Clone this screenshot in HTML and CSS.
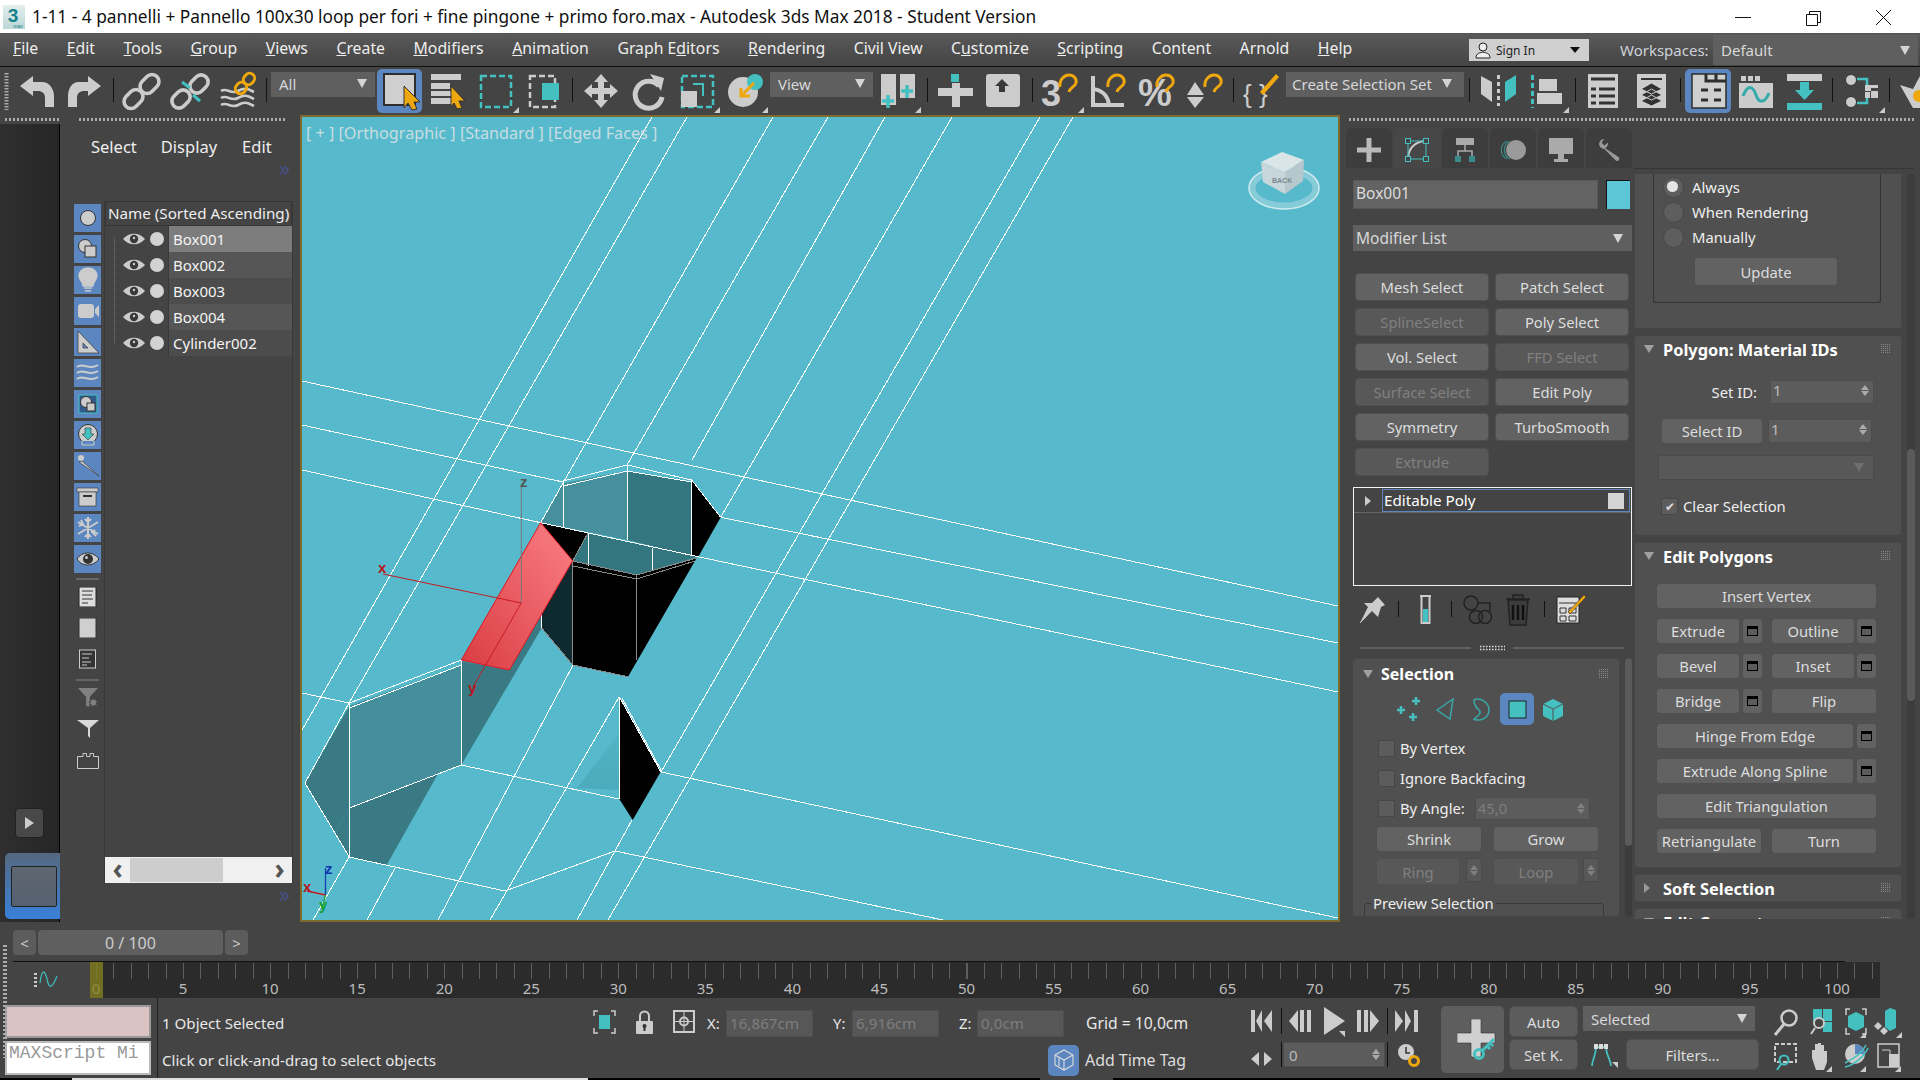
FILE: index.html
```html
<!DOCTYPE html>
<html lang="en">
<head>
<meta charset="utf-8">
<title>3ds Max 2018</title>
<link rel="stylesheet" href="styles.css">
</head>
<body>
<svg class="defs" width="0" height="0">
  <defs>
    <linearGradient id="redface" x1="1" y1="0" x2="0" y2="1"><stop offset="0" stop-color="#fa7f85"/><stop offset="1" stop-color="#d93c42"/></linearGradient>
    <linearGradient id="appbg" x1="0" y1="0" x2="0" y2="1"><stop offset="0" stop-color="#e4eeee"/><stop offset="1" stop-color="#bcd6d6"/></linearGradient>
    <linearGradient id="shadowfade" x1="0" y1="0" x2="0" y2="1"><stop offset="0" stop-color="#4aa9ba" stop-opacity=".35"/><stop offset="1" stop-color="#4aa9ba" stop-opacity=".9"/></linearGradient>
    <path id="hook" d="M0 12 C-1 4 5 0 9 0 C14 0 17 4 16 8 C15 12 10 12 9 17" fill="none" stroke="#eea80e" stroke-width="3"/>
    <path id="tri" d="M6 0 V6 H0 Z" fill="#ccc"/>
  </defs>
</svg>

<header class="titlebar">
  <svg class="appicon" viewBox="0 0 22 24" width="22" height="24"><rect width="22" height="24" fill="url(#appbg)"/><text x="10" y="17" class="appicon-3">3</text><text x="15" y="23" class="appicon-s">max</text></svg>
  <span class="title">1-11 - 4 pannelli + Pannello 100x30 loop per fori + fine pingone + primo foro.max - Autodesk 3ds Max 2018 - Student Version</span>
  <svg class="winbtns" viewBox="1700 0 220 34" width="220" height="34">
    <path d="M1735 17.5 H1751" stroke="#111" fill="none"/>
    <path d="M1806.5 14.5 H1817.5 V25.5 H1806.5 Z M1809.5 14 V11.5 H1820.5 V22.5 H1818" stroke="#111" fill="none"/>
    <path d="M1876 10 L1891 25 M1891 10 L1876 25" stroke="#111" fill="none"/>
  </svg>
</header>

<nav class="menubar">
  <div class="menus">
    <span><u>F</u>ile</span><span><u>E</u>dit</span><span><u>T</u>ools</span><span><u>G</u>roup</span><span><u>V</u>iews</span><span><u>C</u>reate</span><span><u>M</u>odifiers</span><span><u>A</u>nimation</span><span>Graph E<u>d</u>itors</span><span><u>R</u>endering</span><span>Civil View</span><span>C<u>u</u>stomize</span><span><u>S</u>cripting</span><span>Content</span><span>Arnold</span><span><u>H</u>elp</span>
  </div>
  <div class="signin">
    <svg viewBox="0 0 16 18" width="16" height="18"><circle cx="8" cy="6" r="4" fill="#eee" stroke="#222"/><path d="M1 17 C1 12 5 12 8 11 C11 12 15 12 15 17 Z" fill="#eee" stroke="#222"/></svg>
    <span class="signin-text">Sign In</span><i class="caret dark"></i>
  </div>
  <span class="ws-label">Workspaces:</span>
  <div class="dd ws">Default<i class="caret"></i></div>
</nav>

<section class="toolbar">
  <svg viewBox="0 67 271 48" width="271" height="48">
    <path d="M6.5 73 V110" stroke="#aaa" stroke-width="4" stroke-dasharray="1.5 1.5" fill="none"/>
    <path d="M20 86 L33 76 V82 H42 C50 82 54 90 54 96 V107 H45 V98 C45 93 42 91 38 91 H33 V96 Z" fill="#ccc"/>
    <path d="M101 86 L88 76 V82 H79 C71 82 68 90 68 96 V107 H77 V98 C77 93 80 91 84 91 H88 V96 Z" fill="#ccc"/>
    <path d="M113.5 78 V102 M266.5 78 V102" stroke="#111"/>
    <g fill="none" stroke="#ccc" stroke-width="3.6">
      <rect x="139" y="77" width="21" height="14" rx="7" transform="rotate(-45 149.5 84)"/>
      <rect x="123" y="92" width="21" height="14" rx="7" transform="rotate(-45 133.5 99)"/>
      <rect x="189" y="77" width="20" height="14" rx="7" transform="rotate(-45 199 84)"/>
      <rect x="171" y="92" width="20" height="14" rx="7" transform="rotate(-45 181 99)"/>
    </g>
    <path d="M182 82 L190 88 M193 95 L200 101" stroke="#45c0c0" stroke-width="3"/>
    <g fill="none" stroke="#ccc" stroke-width="2.6">
      <path d="M221 91 C227 87 231 95 238 91 S248 89 254 92"/>
      <path d="M221 98 C227 94 231 102 238 98 S248 96 254 99"/>
      <path d="M221 105 C227 101 231 109 238 105 S248 103 254 106"/>
    </g>
    <g fill="none" stroke="#eea80e" stroke-width="3">
      <rect x="243" y="74" width="12" height="10" rx="5" transform="rotate(-50 249 79)"/>
      <rect x="235" y="83" width="12" height="10" rx="5" transform="rotate(-50 241 88)"/>
    </g>
  </svg>
  <div class="dd tool-all">All<i class="caret"></i></div>
  <svg viewBox="375 67 395 48" width="395" height="48">
    <rect x="377" y="69" width="45" height="44" rx="5" fill="#5b86bf"/>
    <rect x="384" y="74" width="31" height="31" fill="#cfcfcf" stroke="#2e2e2e" stroke-width="2"/>
    <path d="M404 86 L420 102 H414 L417 109 L412 110 L408 103 L404 108 Z" fill="#eea80e" stroke="#333"/>
    <path d="M431 74 H461 V80 H431 Z M431 83 H450 V89 H431 Z M431 91 H451 V96 H431 Z M431 98 H451 V104 H431 Z" fill="#ccc"/>
    <path d="M451 86 L465 101 H459 L462 108 L457 109 L454 103 L451 107 Z" fill="#eea80e" stroke="#333"/>
    <rect x="481" y="76" width="30" height="31" fill="none" stroke="#45c0c0" stroke-width="2.5" stroke-dasharray="6 3"/>
    <use href="#tri" x="513" y="107"/>
    <rect x="530" y="76" width="25" height="31" fill="none" stroke="#ccc" stroke-width="2.5" stroke-dasharray="6 3"/>
    <rect x="542" y="83" width="17" height="17" fill="#45c0c0"/>
    <path d="M572.5 78 V102" stroke="#111"/>
    <path d="M601 74 L608 82 H604 V88 H610 V84 L618 91 L610 98 V94 H604 V100 H608 L601 108 L594 100 H598 V94 H592 V98 L584 91 L592 84 V88 H598 V82 H594 Z" fill="#ccc"/>
    <path d="M659 86 A13.5 13.5 0 1 0 662 97" fill="none" stroke="#ccc" stroke-width="5"/>
    <path d="M650 74 L664 78 L661 91 Z" fill="#ccc"/>
    <rect x="682" y="76" width="31" height="31" fill="none" stroke="#45c0c0" stroke-width="2.5" stroke-dasharray="6 3"/>
    <rect x="681" y="91" width="16" height="16" fill="#ccc"/>
    <path d="M693 84 H703 V96" fill="none" stroke="#45c0c0" stroke-width="2"/>
    <use href="#tri" x="714" y="107"/>
    <circle cx="743" cy="92" r="15" fill="#ccc"/>
    <circle cx="755" cy="82" r="8" fill="#45c0c0"/>
    <path d="M754 83 L743 94 M741 88 V96 H750" fill="none" stroke="#eea80e" stroke-width="3"/>
    <use href="#tri" x="762" y="107"/>
  </svg>
  <div class="dd tool-view">View<i class="caret"></i></div>
  <svg viewBox="873 67 413 48" width="413" height="48">
    <path d="M881 74 H896 V105 H881 Z M900 74 H915 V98 H900 Z" fill="#ccc"/>
    <path d="M888 95 V108 M882 101 H894 M907 85 V98 M901 91 H913" stroke="#45c0c0" stroke-width="3.5"/>
    <use href="#tri" x="915" y="107"/>
    <path d="M927.5 78 V102 M1032.5 78 V102 M1233.5 78 V102" stroke="#111"/>
    <rect x="951" y="74" width="8" height="8" fill="#45c0c0"/>
    <path d="M938 88 H952 V83 H960 V88 H973 V96 H960 V107 H952 V96 H938 Z" fill="#ccc"/>
    <rect x="986" y="74" width="34" height="33" rx="3" fill="#ccc"/>
    <path d="M1002 79 L1009 86 H1005 V92 H999 V86 H995 Z" fill="#3a3a3a"/>
    <text x="1041" y="106" class="snap-glyph">3</text>
    <use href="#hook" x="1060" y="75"/>
    <use href="#tri" x="1078" y="107"/>
    <path d="M1093 76 V105 H1124 M1093 89 C1102 90 1108 96 1109 105" fill="none" stroke="#ccc" stroke-width="4"/>
    <use href="#hook" x="1108" y="75"/>
    <text x="1138" y="106" class="snap-pct">%</text>
    <use href="#hook" x="1157" y="75"/>
    <path d="M1195 82 L1204 95 H1187 Z M1187 97 H1204 L1195 108 Z" fill="#ccc"/>
    <use href="#hook" x="1205" y="75"/>
    <text x="1243" y="103" class="brace-glyph">{ }</text>
    <path d="M1260 92 L1276 74 L1279 77 L1263 95 Z" fill="#eea80e"/>
  </svg>
  <div class="dd tool-set">Create Selection Set<i class="caret"></i></div>
  <svg viewBox="1464 67 456 48" width="456" height="48">
    <path d="M1469.5 78 V102 M1575.5 78 V102 M1680.5 78 V102 M1832.5 78 V102 M1889.5 78 V102" stroke="#111"/>
    <path d="M1481 76 L1492 82 V102 L1481 94 Z" fill="#ccc"/>
    <path d="M1498.5 75 V106" stroke="#ccc" stroke-width="3" stroke-dasharray="4 3"/>
    <path d="M1516 75 L1505 82 V102 L1516 94 Z" fill="#45c0c0"/>
    <path d="M1532.5 75 V108" stroke="#45c0c0" stroke-width="3" stroke-dasharray="5 3"/>
    <path d="M1539 79 H1557 V91 H1539 Z M1537 93 H1562 V104 H1537 Z" fill="#ccc"/>
    <use href="#tri" x="1563" y="107"/>
    <rect x="1588" y="74" width="30" height="34" fill="#ccc"/>
    <path d="M1591 79 H1615 M1591 89 H1596 M1599 89 H1615 M1591 96 H1596 M1599 96 H1615 M1591 103 H1596 M1599 103 H1615" stroke="#333" stroke-width="3"/>
    <rect x="1637" y="74" width="29" height="34" fill="#ccc"/>
    <path d="M1641 79 H1662" stroke="#333" stroke-width="2"/>
    <path d="M1651.5 83 L1662 89 L1651.5 94 L1641 89 Z M1651.5 89 L1662 95 L1651.5 100 L1641 95 Z M1651.5 95 L1662 101 L1651.5 106 L1641 101 Z" fill="#333" stroke="#ccc"/>
    <rect x="1685" y="69" width="46" height="44" rx="5" fill="#5b86bf"/>
    <path d="M1692 74 H1726 V108 H1692 Z" fill="#cfcfcf" stroke="#2e2e2e" stroke-width="1.5"/>
    <path d="M1706 74 V81 H1726 M1716 74 V81 M1701 90 H1708 M1714 90 H1721 M1701 100 H1708 M1714 100 H1721" fill="none" stroke="#2e2e2e" stroke-width="3"/>
    <rect x="1739" y="74" width="34" height="34" fill="#ccc"/>
    <path d="M1739 74 H1773 V83 H1739 Z" fill="#444"/>
    <path d="M1741 76 H1746 V81 H1741 Z M1748 76 H1753 V81 H1748 Z M1755 76 H1760 V81 H1755 Z" fill="#ccc"/>
    <path d="M1743 96 C1748 84 1753 86 1756 95 C1759 104 1765 103 1769 93" fill="none" stroke="#35aaaa" stroke-width="3"/>
    <path d="M1787 74 H1822 V81 H1787 Z" fill="#ccc"/>
    <path d="M1800 82 H1809 V90 H1814 L1804.5 100 L1795 90 H1800 Z" fill="#45c0c0"/>
    <rect x="1787" y="103" width="35" height="7" fill="#45c0c0"/>
    <circle cx="1851" cy="80" r="5.5" fill="#ccc" stroke="#333"/><circle cx="1851" cy="102" r="5.5" fill="#ccc" stroke="#333"/>
    <path d="M1857 79 H1867 V86 M1857 103 H1867 V97" fill="none" stroke="#45c0c0" stroke-width="2.5"/>
    <path d="M1865 85 H1871 V91 H1865 Z M1871 91 H1878 V98 H1871 Z M1871 85 H1878 V88 H1871 Z M1865 92 H1870 V98 H1865 Z" fill="#ccc"/>
    <use href="#tri" x="1879" y="107"/>
    <path d="M1900 85 L1913 89 L1920 76 V108 H1913 Z" fill="#ccc"/>
    <circle cx="1919" cy="96" r="6" fill="#eea80e"/>
  </svg>
</section>

<main class="main">
  <aside class="sidebar">
    <div class="handle"><i class="dots dots-side"></i></div>
    <div class="darkpanel">
      <div class="playbtn"><i class="play"></i></div>
      <div class="thumb"><div class="thumb-in"></div></div>
    </div>
  </aside>

  <section class="explorer">
    <div class="handle"><i class="dots dots-exp"></i></div>
    <div class="exp-menu"><span>Select</span><span>Display</span><span>Edit</span></div>
    <div class="chev">»</div>
    <div class="exp-body">
      <div class="exp-tools">
        <div class="ebtn"><svg viewBox="0 0 27 28"><circle cx="14" cy="14" r="7.5" fill="#ccc" stroke="#333"/></svg></div>
        <div class="ebtn"><svg viewBox="0 0 27 28"><circle cx="11" cy="11" r="6.5" fill="#ccc" stroke="#333"/><rect x="11" y="11" width="11" height="11" fill="#ccc" stroke="#333"/></svg></div>
        <div class="ebtn"><svg viewBox="0 0 27 28"><path d="M14 2 C8 2 5 6 5 10 C5 14 9 16 9 20 H19 C19 16 23 14 23 10 C23 6 20 2 14 2 Z M10 22 H18 M11 25 H17" fill="#ccc" stroke="#ccc" stroke-width="1.3"/></svg></div>
        <div class="ebtn"><svg viewBox="0 0 27 28"><rect x="4" y="7" width="16" height="14" rx="3" fill="#ccc"/><path d="M21 12 L25 8 V20 L21 16 Z" fill="#ccc"/></svg></div>
        <div class="ebtn"><svg viewBox="0 0 27 28"><path d="M4 3 L25 25 H4 Z M9 15 V20 H14 Z" fill="#ccc" fill-rule="evenodd" stroke="#333" stroke-width=".7"/></svg></div>
        <div class="ebtn"><svg viewBox="0 0 27 28"><path d="M3 8 C9 3 16 12 24 6 M3 14 C9 9 16 18 24 12 M3 20 C9 15 16 24 24 18" fill="none" stroke="#ccc" stroke-width="2"/></svg></div>
        <div class="ebtn"><svg viewBox="0 0 27 28"><rect x="5" y="5" width="18" height="18" fill="#2f5a8a" stroke="#45c0c0"/><circle cx="12" cy="12" r="5.5" fill="#ccc" stroke="#333"/><rect x="13" y="13" width="8" height="8" fill="#ccc" stroke="#333"/></svg></div>
        <div class="ebtn"><svg viewBox="0 0 27 28"><circle cx="14" cy="13" r="9.5" fill="#ccc" stroke="#333"/><path d="M11 7 H17 V13 H20 L14 19 L8 13 H11 Z" fill="#45c0c0" stroke="#333" stroke-width=".6"/><path d="M8 20 V24 H20 V20" fill="#5b86bf" stroke="#ccc"/></svg></div>
        <div class="ebtn"><svg viewBox="0 0 27 28"><circle cx="7" cy="6" r="3" fill="#ccc"/><path d="M8 9 L25 24 L5 10 Z" fill="#ccc" stroke="#333" stroke-width=".6"/></svg></div>
        <div class="ebtn"><svg viewBox="0 0 27 28"><rect x="3" y="5" width="21" height="4" fill="#ccc" stroke="#333" stroke-width=".6"/><rect x="5" y="9" width="17" height="14" fill="#ccc" stroke="#333" stroke-width=".6"/><path d="M9 13 H18" stroke="#333" stroke-width="2"/></svg></div>
        <div class="ebtn"><svg viewBox="0 0 27 28"><path d="M14 3 V25 M4 8 L24 20 M24 8 L4 20 M11 5 L14 8 L17 5 M11 23 L14 20 L17 23 M5 12 L9 10 L7 6 M22 22 L18 18 L21 16" fill="none" stroke="#ccc" stroke-width="2"/></svg></div>
        <div class="ebtn"><svg viewBox="0 0 27 28"><path d="M3 14 C8 6 19 6 25 14 C19 22 8 22 3 14 Z" fill="#ccc" stroke="#333"/><circle cx="14" cy="14" r="5" fill="#333"/><circle cx="12.5" cy="12.5" r="1.5" fill="#ccc"/></svg></div>
        <hr class="esep">
        <div class="eicon"><svg viewBox="0 0 27 20"><rect x="5" y="0" width="17" height="20" fill="#ddd" stroke="#222"/><path d="M8 4 H19 M8 8 H18 M8 12 H19 M8 16 H14" stroke="#333"/></svg></div>
        <div class="eicon"><svg viewBox="0 0 27 20"><rect x="5" y="0" width="17" height="20" fill="#cfcfcf" stroke="#333"/></svg></div>
        <div class="eicon"><svg viewBox="0 0 27 20"><rect x="5.5" y="1" width="16" height="18" fill="#333" stroke="#ccc"/><path d="M8 5 H18 M8 9 H15 M8 13 H17 M8 16 H13" stroke="#ccc"/></svg></div>
        <hr class="esep">
        <div class="eicon"><svg viewBox="0 0 27 22"><path d="M3 0 H25 L16 10 V20 H12 V10 Z" fill="#808080"/><circle cx="20" cy="16" r="4" fill="#808080" stroke="#444" stroke-dasharray="2 1" stroke-width="2"/></svg></div>
        <div class="eicon"><svg viewBox="0 0 27 20"><path d="M3 1 H25 L16 9 V19 L14 17 V9 Z" fill="#d8d8d8"/></svg></div>
        <div class="eicon"><svg viewBox="0 0 27 20"><path d="M3.5 18.5 V6.5 H9 V3.5 H12.5 V6.5 H16 V3.5 H19.5 V6.5 H24.5 V18.5 Z" fill="none" stroke="#ccc"/></svg></div>
      </div>
      <div class="tree">
        <div class="tree-head">Name (Sorted Ascending)</div>
        <div class="tree-rows">
          <i class="tree-guide"></i>
          <div class="trow"><svg class="eye" viewBox="0 0 22 14"><path d="M0 7 C6 0 16 0 22 7 C16 14 6 14 0 7 Z" fill="#ccc"/><circle cx="11" cy="7" r="4.2" fill="#3a3a3a"/><circle cx="11" cy="6" r="1.2" fill="#ccc"/></svg><i class="dot"></i><span class="tname sel">Box001</span></div>
          <div class="trow"><svg class="eye" viewBox="0 0 22 14"><path d="M0 7 C6 0 16 0 22 7 C16 14 6 14 0 7 Z" fill="#ccc"/><circle cx="11" cy="7" r="4.2" fill="#3a3a3a"/><circle cx="11" cy="6" r="1.2" fill="#ccc"/></svg><i class="dot"></i><span class="tname lt">Box002</span></div>
          <div class="trow"><svg class="eye" viewBox="0 0 22 14"><path d="M0 7 C6 0 16 0 22 7 C16 14 6 14 0 7 Z" fill="#ccc"/><circle cx="11" cy="7" r="4.2" fill="#3a3a3a"/><circle cx="11" cy="6" r="1.2" fill="#ccc"/></svg><i class="dot"></i><span class="tname">Box003</span></div>
          <div class="trow"><svg class="eye" viewBox="0 0 22 14"><path d="M0 7 C6 0 16 0 22 7 C16 14 6 14 0 7 Z" fill="#ccc"/><circle cx="11" cy="7" r="4.2" fill="#3a3a3a"/><circle cx="11" cy="6" r="1.2" fill="#ccc"/></svg><i class="dot"></i><span class="tname lt">Box004</span></div>
          <div class="trow"><svg class="eye" viewBox="0 0 22 14"><path d="M0 7 C6 0 16 0 22 7 C16 14 6 14 0 7 Z" fill="#ccc"/><circle cx="11" cy="7" r="4.2" fill="#3a3a3a"/><circle cx="11" cy="6" r="1.2" fill="#ccc"/></svg><i class="dot"></i><span class="tname">Cylinder002</span></div>
        </div>
        <div class="hscroll"><span class="harrow">‹</span><i class="hthumb"></i><span class="harrow">›</span></div>
      </div>
    </div>
    <div class="chev chev2">»</div>
  </section>

  <section class="viewport">
    <span class="vp-label">[ + ] [Orthographic ] [Standard ] [Edged Faces ]</span>
    <svg class="scene" viewBox="302 117 1036 803" width="1036" height="803">
      <rect x="302" y="117" width="1036" height="803" fill="#56bacc"/>
      <polygon points="619,733 619,790 577,788" fill="url(#shadowfade)"/>
      <polygon points="540.7,522.7 563.3,483.3 627.3,470.7 627.3,540 563.3,527" fill="#468f9c"/>
      <polygon points="627.3,470.7 691.7,481.7 691.7,556 627.3,540" fill="#347680"/>
      <polygon points="588,533.3 698.3,556.7 636.7,575 572.7,561" fill="#347680"/>
      <polygon points="691.7,480 720.7,517.3 698.3,556.7 691.7,555" fill="#000"/>
      <polygon points="540.7,522.7 588,533.3 572.7,560.7" fill="#000"/>
      <polygon points="572.7,561 636.7,575 696.7,558 628,676.7 572.7,665" fill="#000"/>
      <polygon points="541.7,610 572.7,561 572.7,665 541.7,628" fill="#0e2a30"/>
      <polygon points="461.3,661 509.3,670 541.7,612 541.7,628 461.3,765" fill="#397a84"/>
      <polygon points="349.3,706 461.3,665 461.3,765 349.3,808" fill="#458e9b"/>
      <polygon points="305,783 349.3,706 349.3,808 335,833" fill="#397a84"/>
      <polygon points="335,833 349.3,808 438.3,773.3 386.7,865 349.3,857" fill="#397a84"/>
      <polygon points="619.3,696.7 660.7,771.7 632.7,820 619.3,799" fill="#000"/>
      <g class="wire">
        <path d="M302 381 L1338 606"/>
        <path d="M302 425 L563 482 M720.7 517.3 L1338 643" />
        <path d="M302 470 L540.7 522.7 M540.7 522.7 L698 556.7 L1338 692"/>
        <path d="M302 693 L349 703 M661 772 L1338 918"/>
        <path d="M461 765 L619 799"/>
        <path d="M349 857 L505 891 L615 851 L943 920"/>
        <path d="M652 117 L302 730"/>
        <path d="M687 117 L349 703 L305 783"/>
        <path d="M773 117 L563 483 L540.7 522.7"/>
        <path d="M828 117 L627 465"/>
        <path d="M885 117 L692 460"/>
        <path d="M952 117 L720.7 517.3"/>
        <path d="M1040 117 L661 772 M632 820 L577 920"/>
        <path d="M1073 117 L608 920"/>
        <path d="M619.3 696.7 L490 920"/>
        <path d="M573 665 L438 920"/>
        <path d="M395 868 L367 920"/>
        <path d="M349 857 L313 920"/>
        <path d="M563.3 481 L627.3 465 L691.7 480 L720.7 517.3 M563.3 486 L627.3 471 L691.7 482"/>
        <path d="M563.3 483 V527 M627.3 465 V540 M691.7 480 V555 M588 533 V566 M652.7 548 V570 M541 615 V628"/>
        <path d="M349.3 703 V857 M461.3 660 V765 M349.3 703 L461.3 660 M349.3 708 L461.3 665 M305 783 L349.3 857 M349.3 808 L461.3 765"/>
        <path d="M619.3 696.7 V799 M619.3 696.7 L660.7 771.7 M622 698 L661 770"/>
      </g>
      <path class="greyedge" d="M572.7 561 L636.7 575 L696.7 558 M572.7 566 L636.7 579 L695 561 M572.7 561 V665 L628 676.7 M636.7 575 V660 M541.7 628 L572.7 665 M588 533 L572.7 561"/>
      <polygon points="540.7,522.7 572.7,560.7 509.3,670 461.3,660" fill="url(#redface)" stroke="#e0141e"/>
      <path d="M521.3 603 V485" stroke="#777" fill="none"/>
      <path d="M521.3 603 L383 574 M521.3 603 L473 687" stroke="#c51c22" fill="none"/>
      <text x="520" y="487" class="gz gz-grey">z</text>
      <text x="378" y="573" class="gz gz-red">x</text>
      <text x="468" y="693" class="gz gz-red">y</text>
      <path d="M325.5 895 V868" stroke="#1540b0" stroke-width="1.3" fill="none"/>
      <path d="M325.5 895 L307 891" stroke="#c51c22" stroke-width="1.3" fill="none"/>
      <path d="M325.5 895 L322 908" stroke="#18a038" stroke-width="1.3" fill="none"/>
      <text x="325" y="874" class="gz gz-blue">z</text>
      <text x="303" y="892" class="gz gz-red">x</text>
      <text x="319" y="910" class="gz gz-green">y</text>
      <g class="cube">
        <ellipse cx="1284" cy="188" rx="32" ry="18" fill="none" stroke="#86ccd8" stroke-width="7"/>
        <ellipse cx="1284" cy="188" rx="35" ry="21" fill="none" stroke="#cfeaef" stroke-width="1.5"/>
        <polygon points="1282,152 1304,160 1285,172 1261,162" fill="#d9e5e7"/>
        <polygon points="1261,162 1285,172 1285,194 1263,182" fill="#c6d6da"/>
        <polygon points="1285,172 1304,160 1303,181 1285,194" fill="#b6c8cd"/>
        <text x="1272" y="183" class="cube-text">BACK</text>
      </g>
    </svg>
  </section>

  <aside class="panels">
    <div class="cmd">
      <div class="handle-r"><i class="dots dots-r"></i></div>
      <div class="tabs">
        <div class="tab"><svg viewBox="0 0 24 24"><path d="M9.5 0 H14.5 V9.5 H24 V14.5 H14.5 V24 H9.5 V14.5 H0 V9.5 H9.5 Z" fill="#b9b9b9"/></svg></div>
        <div class="tab active"><svg viewBox="0 0 24 24"><path d="M3 20 C4 10 10 4 20 3" fill="none" stroke="#ccc" stroke-width="2"/><path d="M3 3 H21 M3 3 V21 M21 3 V21 M3 21 H21" stroke="#45c0c0"/><rect x="0.5" y="0.5" width="5" height="5" fill="#444" stroke="#45c0c0"/><rect x="18.5" y="0.5" width="5" height="5" fill="#444" stroke="#45c0c0"/><rect x="0.5" y="18.5" width="5" height="5" fill="#444" stroke="#45c0c0"/><rect x="18.5" y="18.5" width="5" height="5" fill="#444" stroke="#45c0c0"/></svg></div>
        <div class="tab"><svg viewBox="0 0 24 24"><rect x="3" y="0" width="18" height="7" fill="#aaa"/><path d="M12 7 V13 M5 19 V13 H19 V19" fill="none" stroke="#aaa" stroke-width="1.5"/><rect x="2" y="18" width="6" height="6" fill="#3c8a8a"/><rect x="16" y="18" width="6" height="6" fill="#3c8a8a"/></svg></div>
        <div class="tab"><svg class="wide" viewBox="0 0 28 24"><path d="M8 3 A10 10 0 0 0 8 21 M11 3 A10 10 0 0 0 11 21" fill="none" stroke="#3c8a8a" stroke-width="1.2"/><circle cx="17" cy="12" r="10" fill="#9a9a9a"/></svg></div>
        <div class="tab"><svg viewBox="0 0 24 24"><rect x="0" y="0" width="24" height="16" fill="#aaa"/><rect x="9" y="16" width="6" height="5" fill="#aaa"/><rect x="5" y="21" width="14" height="3" fill="#aaa"/></svg></div>
        <div class="tab"><svg viewBox="0 0 26 26"><path d="M3 9 C1 5 4 1 8 1 L5 5 L8 8 L12 5 C12 8 11 10 9 11 L24 21 C25 24 22 26 20 24 L8 12 C6 12 4 11 3 9 Z" fill="#999"/></svg></div>
      </div>
      <div class="namerow"><div class="namebox">Box001</div><div class="swatch"></div></div>
      <div class="dd modlist">Modifier List<i class="caret"></i></div>
      <div class="modgrid">
        <div class="b">Mesh Select</div><div class="b">Patch Select</div>
        <div class="b off">SplineSelect</div><div class="b">Poly Select</div>
        <div class="b">Vol. Select</div><div class="b off">FFD Select</div>
        <div class="b off">Surface Select</div><div class="b">Edit Poly</div>
        <div class="b">Symmetry</div><div class="b">TurboSmooth</div>
        <div class="b off">Extrude</div>
      </div>
      <div class="stack">
        <div class="stack-row"><i class="rtri"></i><div class="stack-item">Editable Poly<i class="stack-sq"></i></div></div>
      </div>
      <svg class="stack-tools" viewBox="1340 590 293 65" width="293" height="65">
        <path d="M1378 598 L1385 606 L1381 608 L1378 618 L1372 612 L1363 621 L1360 624 L1368 608 L1364 604 L1372 604 Z" fill="#ccc"/>
        <path d="M1360 624 L1369 614" stroke="#ccc"/>
        <path d="M1398.5 602 V618 M1451.5 602 V618 M1544.5 602 V618" stroke="#111"/>
        <path d="M1420 597 H1431 M1421.5 597 V624 H1429.5 V597" fill="none" stroke="#ccc" stroke-width="2"/>
        <rect x="1423" y="610" width="5" height="13" fill="#45c0c0"/>
        <circle cx="1471" cy="604" r="7" fill="#444" stroke="#222" stroke-width="1.5"/>
        <path d="M1478 604 H1490 V612" fill="none" stroke="#222" stroke-width="1.5"/>
        <circle cx="1476" cy="618" r="6.5" fill="none" stroke="#222" stroke-width="1.5"/>
        <circle cx="1485" cy="618" r="6.5" fill="none" stroke="#222" stroke-width="1.5"/>
        <path d="M1506 600 H1530 M1513 600 V596 H1523 V600 M1508 601 L1510 626 H1526 L1528 601 Z" fill="#3c3c3c" stroke="#222" stroke-width="1.5"/>
        <path d="M1513 606 V621 M1518 606 V621 M1523 606 V621" stroke="#111" stroke-width="2.5"/>
        <rect x="1557" y="598" width="22" height="26" fill="#ddd" stroke="#222"/>
        <path d="M1559 604 H1577 M1560 609 H1566 V614 H1560 Z M1569 609 H1576 V614 H1569 Z M1560 617 H1566 V622 H1560 Z M1569 617 H1576 V622 H1569 Z" fill="none" stroke="#333"/>
        <path d="M1568 613 L1584 596 L1586 598 L1570 615 Z" fill="#eea80e" stroke="#222" stroke-width=".5"/>
        <path d="M1360 649 H1471 M1513 649 H1624" stroke="#6a6a6a" stroke-width="1.5"/>
        <path d="M1480 647.5 H1505 M1480 650.5 H1505" stroke="#ddd" stroke-width="1.5" stroke-dasharray="1.5 1.5"/>
      </svg>
      <div class="sel-wrap">
        <div class="rollout r-sel">
          <div class="rhead"><i class="dtri"></i><span>Selection</span><i class="grip"></i></div>
          <svg class="subobj" viewBox="1352 692 268 36" width="268" height="36">
            <rect x="1500" y="694" width="34" height="32" rx="5" fill="#5b86bf"/>
            <path d="M1412 702 H1420 M1416 698 V706 M1397 711 H1405 M1401 707 V715 M1409 718 H1417 M1413 714 V722" stroke="#45c0c0" stroke-width="2.5"/>
            <path d="M1437 711 L1453 700 L1450 720 Z" fill="none" stroke="#38a8a8" stroke-width="1.5"/>
            <path d="M1474 701 C1480 698 1489 703 1489 711 C1489 719 1480 723 1474 720 C1479 716 1482 714 1479 711 C1476 708 1474 706 1474 701 Z" fill="none" stroke="#38a8a8" stroke-width="1.5"/>
            <rect x="1509" y="702" width="17" height="17" fill="#45c0c0" stroke="#222"/>
            <path d="M1553 700 L1563 705 V717 L1553 722 L1543 717 V705 Z" fill="#45c0c0"/>
            <path d="M1543 705 L1553 710 L1563 705 M1553 710 V722" fill="none" stroke="#505050"/>
          </svg>
          <label class="chk first"><i class="box"></i>By Vertex</label>
          <label class="chk"><i class="box"></i>Ignore Backfacing</label>
          <label class="chk"><i class="box"></i>By Angle:<span class="spin angle off-t">45,0<i class="arrows"></i></span></label>
          <div class="sel-btns">
            <div class="b b26 shrink">Shrink</div><div class="b b26 grow">Grow</div>
          </div>
          <div class="sel-btns second">
            <div class="b b26 off ring">Ring</div><div class="mini"><i class="arrows"></i></div>
            <div class="b b26 off loop">Loop</div><div class="mini"><i class="arrows"></i></div>
          </div>
          <div class="groupbox"><span>Preview Selection</span></div>
        </div>
        <div class="vscroll vs1"><i></i></div>
      </div>
    </div>

    <div class="cmd2">
      <div class="handle-r2"></div>
      <div class="cmd2-body">
        <div class="rolls">
          <div class="rollout r-top">
            <div class="radios">
              <div class="radio on">Always</div>
              <div class="radio">When Rendering</div>
              <div class="radio">Manually</div>
              <div class="b update">Update</div>
            </div>
          </div>
          <div class="rollout r-ids">
            <div class="rhead2"><i class="dtri"></i><span>Polygon: Material IDs</span><i class="grip"></i></div>
            <div class="idrow first"><span class="setid">Set ID:</span><span class="spin idspin">1<i class="arrows"></i></span></div>
            <div class="idrow"><div class="b b26 selid">Select ID</div><span class="spin idspin">1<i class="arrows"></i></span></div>
            <div class="dd matdd"><i class="caret dim"></i></div>
            <label class="chk clear"><i class="box checked">✔</i>Clear Selection</label>
          </div>
          <div class="rollout r-edit">
            <div class="rhead2"><i class="dtri"></i><span>Edit Polygons</span><i class="grip"></i></div>
            <div class="erows">
              <div class="erow"><div class="b b26 full">Insert Vertex</div></div>
              <div class="erow"><div class="b b26 wa">Extrude</div><div class="b b26 sq"><i></i></div><div class="b b26 wa">Outline</div><div class="b b26 sq"><i></i></div></div>
              <div class="erow"><div class="b b26 wa">Bevel</div><div class="b b26 sq"><i></i></div><div class="b b26 wa">Inset</div><div class="b b26 sq"><i></i></div></div>
              <div class="erow"><div class="b b26 wa">Bridge</div><div class="b b26 sq"><i></i></div><div class="b b26 wb">Flip</div></div>
              <div class="erow"><div class="b b26 wl">Hinge From Edge</div><div class="b b26 sq"><i></i></div></div>
              <div class="erow"><div class="b b26 wl">Extrude Along Spline</div><div class="b b26 sq"><i></i></div></div>
              <div class="erow"><div class="b b26 full">Edit Triangulation</div></div>
              <div class="erow"><div class="b b26 wc">Retriangulate</div><div class="b b26 wb">Turn</div></div>
            </div>
          </div>
          <div class="rollout r-soft">
            <div class="rhead2"><i class="rtri dim"></i><span>Soft Selection</span><i class="grip"></i></div>
          </div>
          <div class="rollout r-geom">
            <div class="rhead2"><i class="dtri"></i><span>Edit Geometry</span><i class="grip"></i></div>
          </div>
        </div>
        <div class="vscroll vs2"><i></i></div>
      </div>
    </div>
  </aside>
</main>

<footer class="bottom">
  <i class="vdots"></i>
  <div class="slider">
    <div class="s-arrow">&lt;</div><div class="s-bar">0 / 100</div><div class="s-arrow">&gt;</div>
  </div>
  <div class="trackrow">
    <div class="curvebtn"><svg viewBox="0 0 24 18" width="24" height="18"><path d="M0 3 H3 M0 7 H3 M0 11 H3 M0 15 H3" stroke="#ccc" stroke-width="2"/><path d="M6 12 C8 -4 11 0 13 8 C15 18 18 18 23 5" fill="none" stroke="#3fb8b8" stroke-width="1.3"/></svg></div>
    <div class="track">
      <div class="ticks"></div>
      <div class="labels"><span>0</span><span>5</span><span>10</span><span>15</span><span>20</span><span>25</span><span>30</span><span>35</span><span>40</span><span>45</span><span>50</span><span>55</span><span>60</span><span>65</span><span>70</span><span>75</span><span>80</span><span>85</span><span>90</span><span>95</span><span>100</span></div>
      <i class="timemark"></i>
    </div>
  </div>
  <div class="status">
    <div class="listener">
      <div class="pink"></div>
      <div class="mxs">MAXScript Mi</div>
    </div>
    <div class="mid">
      <div class="midrow one">
        <span class="msg">1 Object Selected</span>
        <svg viewBox="590 1002 117 42" width="117" height="42">
          <path d="M594 1016 V1011 H598 M611 1011 H615 V1016 M594 1028 V1033 H598 M615 1028 V1033 H611" fill="none" stroke="#ccc" stroke-width="1.5"/>
          <rect x="599" y="1015" width="11" height="14" fill="#45c0c0"/>
          <path d="M640 1021 V1016 A4.5 4.5 0 0 1 649 1016 V1021" fill="none" stroke="#ccc" stroke-width="2"/>
          <rect x="636" y="1021" width="17" height="13" rx="1" fill="#ccc"/>
          <circle cx="644.5" cy="1026" r="2" fill="#333"/><rect x="643.5" y="1026" width="2" height="5" fill="#333"/>
          <rect x="674" y="1011" width="20" height="21" fill="none" stroke="#ccc" stroke-width="2"/>
          <circle cx="684" cy="1021.5" r="4" fill="none" stroke="#ccc" stroke-width="2"/>
          <path d="M684 1011 V1032 M674 1021.5 H694" stroke="#ccc"/>
        </svg>
        <span class="coord cx">X:</span><span class="field">16,867cm</span>
        <span class="coord cy">Y:</span><span class="field">6,916cm</span>
        <span class="coord cz">Z:</span><span class="field">0,0cm</span>
        <span class="grid-t">Grid = 10,0cm</span>
      </div>
      <div class="midrow two">
        <span class="msg long">Click or click-and-drag to select objects</span>
        <div class="tagbtn"><svg viewBox="0 0 20 22" width="20" height="22"><path d="M10 1 L19 6 V16 L10 21 L1 16 V6 Z M1 6 L10 11 L19 6 M10 11 V21 M5 9 V17" fill="none" stroke="#ddd" stroke-width="1.1"/></svg></div>
        <span class="tagtext">Add Time Tag</span>
      </div>
    </div>
    <div class="playback">
      <svg viewBox="1246 1003 179 36" width="179" height="36">
        <g fill="#ccc">
          <path d="M1251 1010 H1255 V1032 H1251 Z M1262 1010 V1032 L1256 1021 Z M1272 1010 V1032 L1264 1021 Z"/>
          <path d="M1298 1010 V1032 L1289 1021 Z M1300 1010 H1304 V1032 H1300 Z M1307 1010 H1311 V1032 H1307 Z"/>
          <path d="M1324 1007 L1345 1021 L1324 1035 Z"/>
          <path d="M1357 1010 H1361 V1032 H1357 Z M1364 1010 H1368 V1032 H1364 Z M1370 1010 L1379 1021 L1370 1032 Z"/>
          <path d="M1395 1010 L1403 1021 L1395 1032 Z M1405 1010 L1411 1021 L1405 1032 Z M1414 1010 H1418 V1032 H1414 Z"/>
        </g>
        <path d="M1281.5 1008 V1034 M1387.5 1008 V1034" stroke="#111"/>
        <path d="M1345 1037 V1031 H1339 Z" fill="#ccc"/>
      </svg>
      <div class="timerow">
        <svg viewBox="1246 1042 37 25" width="37" height="25"><path d="M1259 1052 V1066 L1251 1059 Z M1264 1052 V1066 L1272 1059 Z" fill="#ccc"/><path d="M1281.5 1042 V1067" stroke="#111"/></svg>
        <span class="spin frame">0<i class="arrows"></i></span>
        <svg viewBox="1385 1042 40 25" width="40" height="25"><path d="M1387.5 1042 V1067" stroke="#111"/><circle cx="1406" cy="1052" r="8" fill="#ccc"/><path d="M1406 1047 V1053 H1410" fill="none" stroke="#333" stroke-width="1.5"/><circle cx="1414" cy="1061" r="4.5" fill="none" stroke="#eea80e" stroke-width="3"/></svg>
      </div>
    </div>
    <div class="keybtn"><svg viewBox="0 0 40 42" width="40" height="42"><path d="M14 0 H24 V14 H38 V24 H24 V38 H14 V24 H0 V14 H14 Z" fill="#d0d0d0" stroke="#333" stroke-width=".6"/><circle cx="22" cy="35" r="4.5" fill="none" stroke="#45c0c0" stroke-width="3"/><path d="M25 32 L37 20 M33 24 L36 27 M30 27 L33 30" fill="none" stroke="#45c0c0" stroke-width="3"/></svg></div>
    <div class="keycol"><div class="b kb">Auto</div><div class="b kb">Set K.</div></div>
    <div class="filtercol">
      <div class="dd seldd">Selected<i class="caret"></i></div>
      <div class="filter-row">
        <svg viewBox="0 0 30 26" width="30" height="26"><path d="M8 5 H18 M8 5 C8 14 4 18 4 24 M18 5 C18 14 23 18 23 24" fill="none" stroke="#45c0c0" stroke-width="1.8"/><rect x="6" y="2" width="4" height="5" fill="#ddd"/><rect x="11" y="2" width="4" height="5" fill="#ddd"/><rect x="16" y="2" width="4" height="5" fill="#ddd"/><path d="M30 26 V20 H24 Z" fill="#ccc"/></svg>
        <div class="b filters">Filters...</div>
      </div>
    </div>
    <svg class="navicons" viewBox="1755 998 165 80" width="165" height="80">
      <circle cx="1789" cy="1018" r="7.5" fill="none" stroke="#ccc" stroke-width="2.5"/><path d="M1784 1024 L1775 1035" stroke="#ccc" stroke-width="3"/>
      <rect x="1813" y="1009" width="9" height="12" fill="#45c0c0"/><rect x="1823" y="1009" width="9" height="12" fill="#45c0c0"/><rect x="1823" y="1022" width="9" height="10" fill="#45c0c0"/>
      <circle cx="1819" cy="1023" r="5" fill="#444" stroke="#ccc" stroke-width="2"/><path d="M1815 1028 L1811 1034" stroke="#ccc" stroke-width="2"/>
      <path d="M1846 1015 V1009 H1850 M1862 1009 H1866 V1015 M1846 1028 V1034 H1850 M1866 1028 V1034 H1862" fill="none" stroke="#ccc" stroke-width="1.5"/>
      <path d="M1856 1012 L1864 1016 V1027 L1856 1031 L1848 1027 V1016 Z" fill="#45c0c0"/>
      <path d="M1896 1010 L1890 1008 L1885 1011 V1027 L1890 1031 L1896 1028 Z" fill="#45c0c0"/><path d="M1884 1027 L1888 1031 L1884 1035 L1880 1031 Z M1878 1022 L1882 1026 L1878 1030 L1874 1026 Z" fill="#ccc"/>
      <use href="#tri" x="1860" y="1032"/><use href="#tri" x="1896" y="1032"/>
      <rect x="1775" y="1044" width="21" height="18" fill="none" stroke="#ccc" stroke-width="2" stroke-dasharray="4 2"/>
      <circle cx="1784" cy="1060" r="4.5" fill="none" stroke="#45c0c0" stroke-width="2"/><path d="M1781 1064 L1777 1070" stroke="#45c0c0" stroke-width="2"/>
      <path d="M1816 1070 L1812 1058 V1050 H1815 V1058 V1044 H1818 V1056 V1043 H1821 V1056 V1045 H1824 V1057 V1051 H1827 V1062 L1824 1070 Z" fill="#ccc"/>
      <use href="#tri" x="1826" y="1066"/>
      <circle cx="1855" cy="1054" r="10" fill="#ccc"/><path d="M1855 1044 A10 10 0 0 1 1865 1054 H1855 Z" fill="#5b86bf"/><path d="M1845 1063 C1853 1059 1862 1054 1866 1045 M1845 1067 C1855 1065 1865 1055 1868 1048" fill="none" stroke="#45c0c0" stroke-width="1.6"/>
      <use href="#tri" x="1860" y="1066"/>
      <rect x="1878" y="1044" width="21" height="23" fill="#444" stroke="#ccc" stroke-width="1.5"/><path d="M1879 1067 H1889 V1054 H1899 V1067 Z" fill="#ccc"/><path d="M1882 1050 H1890 V1054" fill="none" stroke="#ccc"/>
      <use href="#tri" x="1895" y="1066"/>
    </svg>
  </div>
  <div class="edge"><i class="e1"></i><i class="e2"></i></div>
</footer>
</body>
</html>
```

FILE: styles.css
```css
* { box-sizing: border-box; }
html, body { margin: 0; padding: 0; }
body {
  width: 1920px; height: 1080px; overflow: hidden;
  background: #444; color: #ddd;
  font-family: "Noto Sans", "Open Sans", "Liberation Sans", sans-serif;
  font-size: 15px;
  display: flex; flex-direction: column;
}
svg { display: block; flex: none; }
i { display: block; flex: none; font-style: normal; }
.defs { position: absolute; }

/* title bar */
.titlebar { height: 34px; background: #fff; color: #111; display: flex; align-items: center; flex: none; position: relative; border-bottom: 1px solid #555; }
.appicon { margin-left: 3px; }
.appicon-3 { font: bold 19px "Liberation Sans", sans-serif; fill: #14808a; text-anchor: middle; }
.appicon-s { font: 5px "Liberation Sans", sans-serif; fill: #14808a; text-anchor: middle; }
.title { margin-left: 7px; font-size: 17.3px; white-space: nowrap; flex: 1; }
.winbtns { flex: none; }

/* menu */
.menubar { height: 33px; flex: none; display: flex; align-items: center; background: linear-gradient(#595959, #444); border-bottom: 1px solid #111; color: #eee; }
.menus { display: flex; gap: 28.5px; margin-left: 13px; width: 1456px; font-size: 15.8px; white-space: nowrap; padding-bottom: 4px; }
.signin { width: 120px; height: 22px; background: #cfcfcf; color: #222; display: flex; align-items: center; padding-left: 6px; font-size: 12px; }
.signin-text { margin-left: 5px; flex: 1; }
.ws-label { margin-left: 31px; width: 93px; color: #cdd2d8; font-size: 15px; }
.caret { width: 0; height: 0; border-left: 5.5px solid transparent; border-right: 5.5px solid transparent; border-top: 9px solid #d4d4d4; }
.caret.dark { border-top-color: #111; margin-right: 9px; border-top-width: 6px; }
.caret.dim { border-top-color: #6f6f6f; }
.dd { display: flex; align-items: center; justify-content: space-between; background: #5f5f5f; color: #d8d8d8; padding: 0 8px; white-space: nowrap; flex: none; }
.ws { width: 205px; height: 30px; }

/* toolbar */
.toolbar { height: 48px; flex: none; display: flex; align-items: flex-start; background: #444; }
.tool-all { width: 104px; height: 25px; margin-top: 5px; padding-bottom: 2px; }
.tool-view { width: 103px; height: 25px; margin-top: 5px; padding-bottom: 2px; }
.tool-set { width: 178px; height: 25px; margin-top: 5px; padding: 0 12px 2px 6px; }
.snap-glyph { font: bold 36px "Liberation Sans", sans-serif; fill: #ccc; }
.snap-pct { font: bold 38px "Liberation Sans", sans-serif; fill: #ccc; }
.brace-glyph { font: 26px "Liberation Sans", sans-serif; fill: #ccc; }

/* main */
.main { flex: none; height: 807px; display: flex; background: #444; }
.sidebar { width: 60px; flex: none; display: flex; flex-direction: column; }
.handle { height: 9px; flex: none; padding-top: 3px; }
.dots { height: 3px; background: repeating-linear-gradient(90deg, #aaa 0 2px, transparent 2px 4px); }
.dots-side { margin-left: 5px; width: 55px; }
.dots-exp { margin-left: 19px; width: 206px; }
.dots-r { margin-left: 9px; width: 283px; }
.darkpanel { flex: 1; background: linear-gradient(90deg, #2f2f2f, #262626); border-right: 1px solid #000; display: flex; flex-direction: column; align-items: flex-start; justify-content: flex-end; padding-bottom: 3px; }
.playbtn { width: 29px; height: 30px; margin: 0 0 15px 15px; background: #484848; border: 1px solid #222; border-radius: 4px; display: flex; align-items: center; justify-content: center; }
.play { width: 0; height: 0; border-left: 9px solid #ccc; border-top: 6px solid transparent; border-bottom: 6px solid transparent; }
.thumb { width: 55px; height: 66px; margin-left: 5px; border-radius: 5px 0 0 5px; background: linear-gradient(#55697f, #3a80da); padding: 13px 3px 12px 6px; }
.thumb-in { height: 41px; background: linear-gradient(#5e6670, #566070); border: 1px solid #222; border-radius: 2px; }

.explorer { width: 240px; flex: none; position: relative; background: #444; }
.exp-menu { display: flex; margin-top: 10px; padding-left: 31px; height: 24px; align-items: center; font-size: 16.5px; color: #eee; }
.exp-menu span:nth-child(2) { margin-left: 24px; }
.exp-menu span:nth-child(3) { margin-left: 25px; }
.chev { position: absolute; left: 219px; top: 45px; color: #48528a; font-size: 22px; line-height: 14px; }
.chev2 { top: 771px; }
.exp-body { display: flex; margin-top: 43px; padding-left: 14px; }
.exp-tools { width: 27px; flex: none; margin-top: 3px; display: flex; flex-direction: column; }
.ebtn { width: 27px; height: 28px; background: #5b86bf; margin-bottom: 3px; }
.ebtn svg, .eicon svg { width: 100%; height: 100%; }
.esep { width: 23px; height: 2px; margin: 2px 2px 7px; border: 0; background: #666; flex: none; }
.eicon { width: 27px; height: 20px; margin: 0 2px 11px 0; }
.eicon + .esep { margin-top: -1px; }
.tree { width: 189px; margin-left: 3px; height: 682px; display: flex; flex-direction: column; border-left: 1px solid #3a3a3a; border-right: 1px solid #3a3a3a; }
.tree-head { height: 25px; border: 1px solid #353535; display: flex; align-items: center; padding: 0 0 2px 2px; font-size: 15.2px; color: #eee; white-space: nowrap; flex: none; overflow: hidden; }
.tree-rows { flex: 1; position: relative; }
.tree-guide { position: absolute; left: 9px; top: 12px; width: 10px; height: 105px; border-left: 1px dotted #777; }
.trow { height: 26px; display: flex; align-items: center; padding-left: 18px; }
.eye { width: 22px; height: 14px; }
.dot { width: 14px; height: 14px; border-radius: 50%; background: #d2d2d2; margin-left: 5px; }
.tname { margin-left: 4px; flex: 1; height: 26px; display: flex; align-items: center; padding: 0 0 1px 4px; background: #4c4c4c; color: #f4f4f4; font-size: 15px; border-left: 1px solid #3a3a3a; }
.tname.sel { background: #7d7d7d; }
.tname.lt { background: #565656; }
.hscroll { height: 26px; background: #f0f0f0; display: flex; align-items: center; flex: none; color: #555; }
.harrow { width: 25px; font-size: 28px; line-height: 22px; text-align: center; font-weight: bold; height: 26px; }
.hthumb { width: 93px; height: 24px; background: #cdcdcd; margin-right: 44px; }

/* viewport */
.viewport { width: 1040px; flex: none; border: 2px solid #7c6b2d; position: relative; background: #56bacc; overflow: hidden; }
.vp-label { position: absolute; left: 4px; top: 5px; color: #c9dde2; font-size: 16.2px; white-space: pre; z-index: 1; }
.wire path { stroke: #fff; fill: none; stroke-width: 1; shape-rendering: crispEdges; }
.greyedge { stroke: #8a8a8a; fill: none; stroke-width: 1; shape-rendering: crispEdges; }
.gz { font: bold 15px "Liberation Sans", sans-serif; }
.gz-grey { fill: #555; }
.gz-red { fill: #b8141c; }
.gz-blue { fill: #1038b0; }
.gz-green { fill: #14a034; }
.cube-text { font: bold 7px "Liberation Sans", sans-serif; fill: #7a8a8e; }

/* command panel */
.panels { flex: 1; display: flex; min-width: 0; }
.cmd { width: 292px; flex: none; }
.handle-r { height: 13px; padding-top: 3px; }
.tabs { height: 40px; display: flex; gap: 2px; margin-left: 6px; }
.tab { width: 46px; background: #3d3d3d; border-radius: 5px 5px 0 0; display: flex; align-items: center; justify-content: center; padding-top: 3px; }
.tab svg { width: 24px; height: 24px; }
.tab svg.wide { width: 28px; }
.tab.active { background: #474747; }
.namerow { display: flex; margin: 12px 0 0 13px; height: 29px; }
.namebox { width: 245px; background: #636363; color: #ddd; padding: 0 2px 3px; display: flex; align-items: center; font-size: 15.5px; border: 1px solid #585858; }
.swatch { width: 24px; margin-left: 8px; background: #5cc6d6; border-top: 1px solid #111; border-left: 1px solid #111; }
.modlist { margin: 16px 0 0 13px; width: 279px; height: 26px; background: #5f5f5f; padding: 0 9px 0 3px; font-size: 15.5px; }
.modgrid { display: grid; grid-template-columns: 134px 134px; column-gap: 6px; row-gap: 7px; margin: 22px 0 0 15px; grid-auto-rows: 28px; }
.b { display: flex; align-items: center; justify-content: center; background: #626262; color: #ddd; border-radius: 4px; border: 1px solid #4f4f4f; font-size: 14.8px; white-space: nowrap; flex: none; }
.b.off { color: #808080; background: #585858; }
.b26 { height: 26px; }
.stack { margin: 11px 0 0 13px; width: 279px; height: 99px; border: 1.5px solid #f2f2f2; padding-top: 1px; }
.stack-row { display: flex; align-items: center; height: 24px; border-bottom: 1px solid #666; }
.rtri { width: 0; height: 0; border-left: 6px solid #ccc; border-top: 5px solid transparent; border-bottom: 5px solid transparent; margin-left: 11px; }
.rtri.dim { border-left-color: #999; margin: 0; }
.stack-item { margin-left: 11px; flex: 1; margin-right: 1px; height: 23px; border: 1px solid #5b86bf; display: flex; align-items: center; justify-content: space-between; padding: 0 5px 2px 1px; color: #fff; font-size: 15.2px; }
.stack-sq { width: 16px; height: 16px; background: #d4d4d4; margin-top: 2px; }
.stack-tools { margin-top: 3px; }
.sel-wrap { display: flex; margin: 4px 0 0 12px; height: 259px; }
.rollout { background: #505050; border-radius: 4px; overflow: hidden; flex: none; border: 1px solid #464646; }
.r-sel { width: 268px; height: 259px; }
.rhead { height: 32px; display: flex; align-items: center; padding: 0 10px 2px; color: #fff; font-weight: bold; font-size: 16px; }
.dtri { width: 0; height: 0; border-top: 8px solid #a0a0a0; border-left: 5px solid transparent; border-right: 5px solid transparent; }
.rhead span { margin-left: 8px; flex: 1; }
.grip { width: 10px; height: 10px; background: repeating-linear-gradient(90deg, #8a8a8a 0 1px, transparent 1px 2px), none; mask: repeating-linear-gradient(#000 0 1px, transparent 1px 2px); }
.subobj { margin: 0 0 0 -1px; }
.chk { display: flex; align-items: center; height: 18px; margin-left: 25px; margin-bottom: 12px; color: #eee; font-size: 14.8px; white-space: nowrap; }
.chk.first { margin-top: 12px; }
.box { width: 17px; height: 17px; background: #5c5c5c; border: 1px solid #474747; margin-right: 5px; color: #ddd; font-size: 11px; line-height: 15px; text-align: center; font-style: normal; }
.spin { background: #5c5c5c; color: #bbb; display: flex; align-items: center; justify-content: space-between; padding: 0 4px 0 2px; position: relative; border: 1px solid #4c4c4c; flex: none; }
.arrows { width: 0; height: 0; border-left: 4px solid transparent; border-right: 4px solid transparent; border-bottom: 5px solid #aaa; position: relative; top: -3px; }
.arrows::after { content: ""; position: absolute; left: -4px; top: 6px; border-left: 4px solid transparent; border-right: 4px solid transparent; border-top: 5px solid #aaa; }
.angle { width: 115px; height: 23px; margin-left: 10px; color: #7c7c7c; }
.off-t .arrows, .mini .arrows { border-bottom-color: #808080; }
.off-t .arrows::after, .mini .arrows::after { border-top-color: #808080; }
.sel-btns { display: flex; margin-left: 23px; height: 26px; margin-top: -3px; }
.sel-btns.second { margin-top: 6px; height: 27px; }
.shrink { width: 106px; }
.grow { width: 106px; margin-left: 11px; }
.ring { width: 84px; height: 27px; }
.loop { width: 86px; height: 27px; margin-left: 11px; }
.mini { width: 16px; height: 24px; margin-left: 6px; background: #585858; border: 1px solid #4a4a4a; display: flex; justify-content: center; align-items: center; border-radius: 2px; }
.mini + .loop { margin-left: 11px; }
.loop + .mini { margin-left: 4px; }
.groupbox { margin: 18px 0 0 11px; width: 240px; height: 40px; border: 1px solid #3a3a3a; border-radius: 3px; position: relative; }
.groupbox span { position: absolute; left: 6px; top: -11px; background: #505050; padding: 0 2px; color: #eee; font-size: 14.8px; line-height: 20px; white-space: nowrap; }
.vscroll { background: #3c3c3c; border-radius: 4px; flex: none; overflow: hidden; }
.vscroll i { background: #5a5a5a; border-radius: 4px; }
.vs1 { width: 7px; margin-left: 5px; height: 259px; }
.vs1 i { height: 188px; }
.vs2 { width: 8px; margin-left: 5px; height: 745px; padding-top: 275px; }
.vs2 i { height: 252px; }

.cmd2 { flex: 1; }
.handle-r2 { height: 13px; padding-top: 3px; }
.handle-r2::before { content: ""; display: block; height: 3px; width: 283px; background: repeating-linear-gradient(90deg, #aaa 0 2px, transparent 2px 4px); }
.cmd2-body { display: flex; margin: 40px 5px 0 2px; padding-top: 5px; border-top: 1px solid #353535; }
.rolls { width: 268px; height: 745px; overflow: hidden; flex: none; }
.rolls .rollout { margin-bottom: 6px; width: 268px; }
.r-top { height: 155px; border-top: 0; border-radius: 0 0 4px 4px; padding: 0 0 0 18px; }
.radios { width: 228px; height: 129px; border: 1px solid #333; border-top: 0; border-radius: 0 0 3px 3px; }
.radio { display: flex; align-items: center; height: 25px; padding-left: 38px; position: relative; color: #eee; font-size: 14.8px; }
.radio::before { content: ""; position: absolute; left: 9px; top: 3px; width: 19px; height: 19px; border-radius: 50%; background: #5e5e5e; border: 1px solid #484848; }
.radio.on::after { content: ""; position: absolute; left: 13px; top: 7px; width: 11px; height: 11px; border-radius: 50%; background: #e4e4e4; }
.update { width: 144px; height: 29px; margin: 8px 0 0 40px; }
.r-ids { height: 201px; }
.rhead2 { height: 30px; display: flex; align-items: center; padding: 0 10px 4px 9px; color: #fff; font-weight: bold; font-size: 16.4px; white-space: nowrap; }
.rhead2 span { margin-left: 9px; flex: 1; }
.idrow { display: flex; align-items: center; padding-left: 26px; height: 26px; margin-bottom: 13px; }
.idrow.first { margin-top: 13px; margin-bottom: 13px; }
.setid { width: 96px; text-align: right; margin-right: 13px; color: #eee; font-size: 14.8px; }
.idspin { width: 104px; height: 24px; margin-left: 0; padding-bottom: 4px; }
.selid { width: 102px; margin-right: 5px; }
.matdd { width: 216px; height: 25px; margin: -2px 0 0 23px; background: #585858; justify-content: flex-end; padding-right: 9px; border: 1px solid #4a4a4a; }
.clear { margin: 17px 0 0 26px; }
.box.checked { font-size: 12px; }
.r-edit { height: 326px; }
.erows { padding: 10px 0 0 21px; display: flex; flex-direction: column; gap: 9px; }
.erow { display: flex; height: 26px; }
.full { width: 221px; }
.wa { width: 84px; }
.wb { width: 106px; }
.wl { width: 198px; }
.wc { width: 106px; }
.sq { width: 21px; }
.wa + .sq, .wl + .sq { margin-left: 2px; }
.sq + .wa, .sq + .wb { margin-left: 8px; }
.sq + .wa + .sq { margin-left: 1px; }
.wc + .wb { margin-left: 9px; }
.sq i { width: 11px; height: 10px; background: #5c5c5c; border: 1px solid #000; border-top-width: 3px; }
.r-soft { height: 28px; }
.r-soft .rhead2 { height: 28px; padding-bottom: 2px; }
.r-soft .rhead2 span { margin-left: 13px; }
.r-geom { height: 40px; }

/* bottom */
.bottom { flex: none; height: 158px; position: relative; background: #444; }
.vdots { position: absolute; left: 3px; top: 23px; width: 4px; height: 113px; background: repeating-linear-gradient(#aaa 0 2px, transparent 2px 4px); }
.slider { height: 39px; padding: 8px 0 0 13px; display: flex; gap: 2px; }
.s-arrow { width: 23px; height: 25px; background: #5c5c5c; border-radius: 4px; display: flex; align-items: center; justify-content: center; color: #ccc; font-size: 15px; }
.s-bar { width: 185px; height: 25px; background: #5f5f5f; border-radius: 4px; display: flex; align-items: center; justify-content: center; color: #ccc; font-size: 16px; }
.trackrow { height: 37px; display: flex; margin-left: 13px; width: 1832px; border-top: 1px solid #111; }
.curvebtn { width: 77px; display: flex; align-items: center; padding-left: 21px; background: #444; flex: none; }
.track { flex: 1; position: relative; background: #2b2b2b; }
.ticks { height: 16px; margin-top: 1px; background: repeating-linear-gradient(90deg, #5e5e5e 0 1px, transparent 1px 17.41px); background-position: 6px 0; }
.labels { display: flex; margin-left: -37.5px; margin-top: -1px; line-height: 20px; color: #bdbdbd; font-size: 15px; }
.labels span { width: 87.05px; flex: none; text-align: center; }
.timemark { position: absolute; left: 0; top: 0; width: 13px; height: 36px; background: #857f1f; opacity: .8; }
.status { height: 80px; display: flex; }
.listener { width: 152px; margin-left: 5px; padding-top: 7px; flex: none; }
.pink { width: 146px; height: 33px; background: #dcc3c3; border: 2px solid #999; }
.mxs { width: 146px; height: 34px; margin-top: 3px; background: #fff; border: 2px solid #bbb; color: #999; font: 18px/20px "Liberation Mono", monospace; white-space: nowrap; overflow: hidden; padding-left: 2px; }
.mid { width: 1089px; flex: none; border-left: 1px solid #222; padding-left: 4px; }
.midrow { display: flex; align-items: center; }
.midrow.one { height: 46px; padding-top: 4px; }
.midrow.two { height: 32px; }
.msg { width: 428px; flex: none; color: #e8e8e8; font-size: 15.1px; white-space: nowrap; }
.msg.long { width: 884px; }
.coord { color: #e8e8e8; flex: none; font-size: 14.8px; }
.cx { width: 19px; }
.cy { width: 39px; text-align: left; padding-left: 20px; }
.cz { width: 38px; padding-left: 20px; }
.field { width: 87px; height: 27px; background: #575757; border: 1px solid #4e4e4e; color: #7e7e7e; display: flex; align-items: center; padding-left: 3px; font-size: 15.2px; flex: none; }
.grid-t { margin-left: 22px; color: #e8e8e8; font-size: 15.7px; white-space: nowrap; }
.tagbtn { width: 31px; height: 31px; background: #5b86bf; border-radius: 5px; display: flex; align-items: center; justify-content: center; margin-left: 2px; flex: none; }
.tagtext { margin-left: 6px; color: #ddd; font-size: 15.9px; white-space: nowrap; }
.playback { width: 179px; padding-top: 5px; flex: none; }
.timerow { display: flex; margin-top: 3px; }
.frame { width: 102px; height: 25px; padding-left: 5px; }
.keybtn { width: 63px; height: 67px; margin: 8px 0 0 16px; background: #5e5e5e; border-radius: 5px; display: flex; align-items: center; justify-content: center; flex: none; padding-left: 8px; }
.keycol { width: 69px; margin: 8px 0 0 5px; flex: none; display: flex; flex-direction: column; gap: 2px; }
.kb { height: 31px; background: #5c5c5c; border-radius: 5px; }
.filtercol { width: 172px; margin: 8px 0 0 5px; flex: none; }
.seldd { height: 25px; }
.filter-row { display: flex; margin-top: 8px; gap: 8px; padding-left: 5px; align-items: center; }
.filters { width: 133px; height: 31px; background: #5c5c5c; border-radius: 5px; }
.navicons { flex: none; }
.edge { height: 2px; display: flex; background: #000; }
.e1 { margin-left: 72px; width: 516px; background: #ddd; }
.e2 { margin-left: 452px; width: 73px; background: #444; }
```
